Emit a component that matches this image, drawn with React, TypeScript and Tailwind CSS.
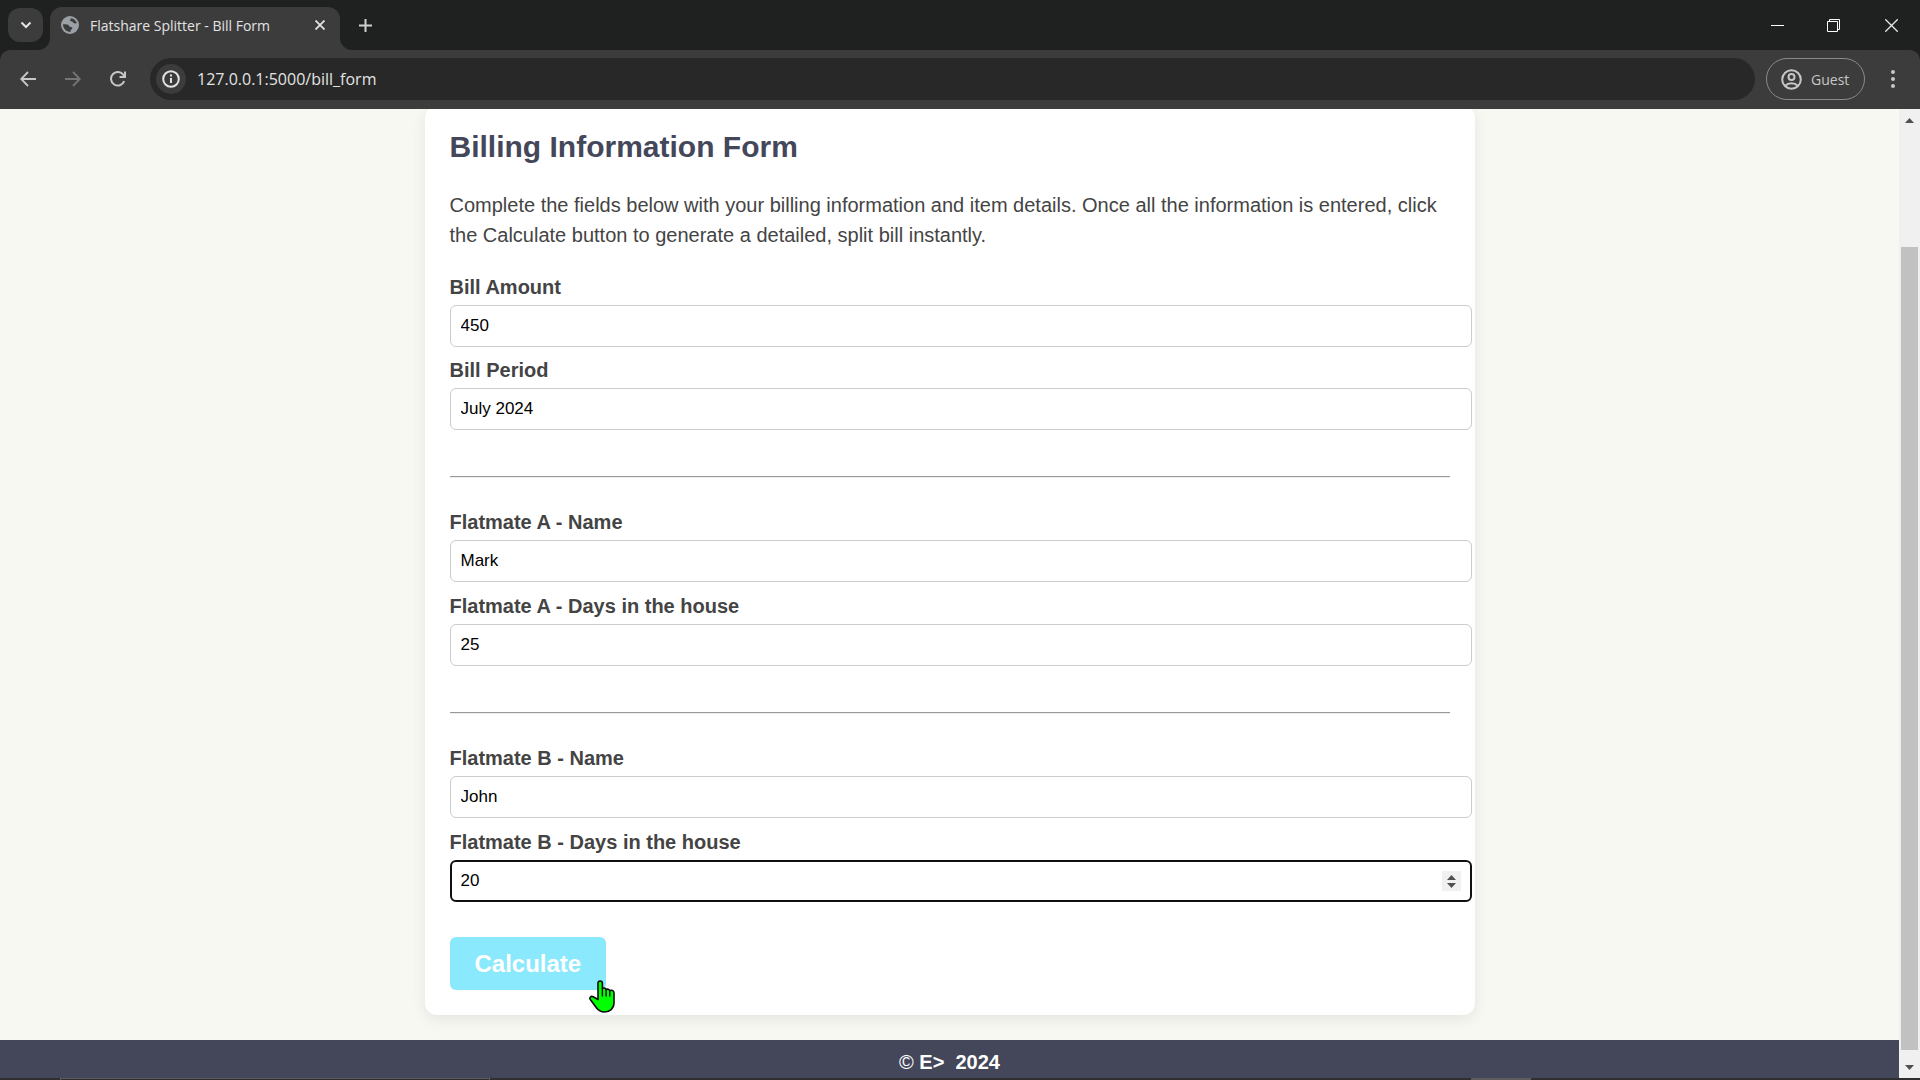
import React, { useState } from "react";

type FieldProps = {
  id: string;
  label: string;
  initial: string;
  numeric?: boolean;
  focused?: boolean;
};

function Field({ id, label, initial, numeric, focused }: FieldProps) {
  const [value, setValue] = useState(initial);
  const step = (by: number) => setValue(String(Number(value || 0) + by));
  return (
    <div className="flex flex-col gap-[3px]">
      <label htmlFor={id} className="text-[20px] leading-[30px] font-bold text-[#444]">
        {label}
      </label>
      <div
        className={
          focused
            ? "flex h-[42px] items-center rounded-md border-2 border-[#101010] bg-white pl-[9px] pr-[9px]"
            : "flex h-[42px] items-center rounded-md border border-[#ccc] bg-white px-[10px]"
        }
      >
        <input
          id={id}
          type="text"
          inputMode={numeric ? "numeric" : "text"}
          value={value}
          onChange={(e) => setValue(e.target.value)}
          className="h-full min-w-0 flex-1 bg-transparent text-[17px] text-black outline-none"
        />
        {focused && (
          <span className="flex h-5 w-[19px] flex-col bg-[#f0f0f0]">
            <button type="button" aria-label="Increase" onClick={() => step(1)} className="flex flex-1 items-end justify-center pb-px">
              <svg width="9" height="5" viewBox="0 0 9 5" fill="#505050"><path d="M0 5 4.500 0 9 5z" /></svg>
            </button>
            <button type="button" aria-label="Decrease" onClick={() => step(-1)} className="flex flex-1 items-start justify-center pt-[2px]">
              <svg width="9" height="5" viewBox="0 0 9 5" fill="#505050"><path d="M0 0h9L4.500 5z" /></svg>
            </button>
          </span>
        )}
      </div>
    </div>
  );
}

function Divider() {
  return <hr className="mr-[22px] mt-[46px] mb-[29px] h-[2px] border-0 border-t border-[#9a9a9a] bg-[#eee]" />;
}

function TabStrip() {
  return (
    <div className="flex h-[50px] items-stretch bg-[#1f2020]">
      <button type="button" aria-label="Search tabs" className="mt-2 ml-2 flex h-[34px] w-[35px] shrink-0 items-center justify-center rounded-xl bg-[#3c3c3c]">
        <svg width="12" height="8" viewBox="0 0 12 8" fill="none" stroke="#e3e3e3" strokeWidth="2"><path d="M1.500 1.500 6 6l4.500-4.500" /></svg>
      </button>
      <div className="relative mt-[7px] ml-[7px] flex w-[290px] shrink-0 items-center rounded-t-xl bg-[#3c3c3c] pr-[10px] pb-[7px] pl-[11px]">
        <svg className="absolute bottom-0 -left-3" width="12" height="12" fill="#3c3c3c"><path d="M12 0v12H0A12 12 0 0 0 12 0z" /></svg>
        <svg className="absolute -right-3 bottom-0" width="12" height="12" fill="#3c3c3c"><path d="M0 0v12h12A12 12 0 0 1 0 0z" /></svg>
        <svg width="18" height="18" viewBox="0 0 18 18">
          <circle cx="9" cy="9" r="9" fill="#9aa0a6" />
          <path d="M9.500 2.200C12 2.300 14.800 4 15.700 7c-1 .7-2.200.6-3 .1-.8-.5-.7-1.600-1.700-1.700-1-.1-2 .2-1.900-.8.100-.9 1-1.300.4-2.400zM2 8.300c1.700.2 3.600-.1 5 .4 1.300.5.900 2 2.200 2.200 1.300.1 2.200.1 2.100 1.300-.1 1.200-1.400 1-1.600 2.100-.1.700-.1 1.100-.3 1.700C5.500 16 1.900 12.700 2 8.300z" fill="#3c3c3c" />
        </svg>
        <span className="ml-[11px] flex-1 truncate text-[14px] text-[#e3e3e3]">Flatshare Splitter - Bill Form</span>
        <button type="button" aria-label="Close tab" className="flex h-5 w-5 items-center justify-center">
          <svg width="10" height="10" viewBox="0 0 10 10" stroke="#e3e3e3" strokeWidth="1.800"><path d="m.5.500 9 9m0-9-9 9" /></svg>
        </button>
      </div>
      <button type="button" aria-label="New tab" className="ml-[15px] flex w-5 items-center justify-center">
        <svg width="13" height="13" viewBox="0 0 13 13" stroke="#d0d0d0" strokeWidth="2"><path d="M6.500 0v13M0 6.500h13" /></svg>
      </button>
      <div className="ml-auto flex">
        <button type="button" aria-label="Minimize" className="flex w-14 items-center justify-center">
          <svg width="13" height="13" viewBox="0 0 13 13" stroke="#fff"><path d="M0 6.500h13" /></svg>
        </button>
        <button type="button" aria-label="Restore" className="flex w-[57px] items-center justify-center">
          <svg width="13" height="13" viewBox="0 0 13 13" fill="none" stroke="#fff"><path d="M.5 2.500h10v10H.5zM2.500 2.500v-2h10v10h-2" /></svg>
        </button>
        <button type="button" aria-label="Close" className="flex w-[58px] items-center justify-center">
          <svg width="13" height="13" viewBox="0 0 13 13" stroke="#e8e8e8" strokeWidth="1.300"><path d="m.3.300 12.400 12.400m0-12.400L.3 12.700" /></svg>
        </button>
      </div>
    </div>
  );
}

function Toolbar() {
  return (
    <div className="bg-[#1f2020]">
      <div className="flex h-[59px] items-center rounded-t-[10px] bg-[#3c3c3c] pb-[1px]">
        <button type="button" aria-label="Back" className="ml-4 flex h-6 w-6 items-center justify-center">
          <svg width="16" height="16" viewBox="0 0 16 16" fill="none" stroke="#c7c7c7" strokeWidth="1.800"><path d="M16 8H1.500M8 1 1.200 8 8 15" /></svg>
        </button>
        <button type="button" aria-label="Forward" className="ml-[21px] flex h-6 w-6 items-center justify-center">
          <svg width="16" height="16" viewBox="0 0 16 16" fill="none" stroke="#757575" strokeWidth="1.800"><path d="M0 8h14.500M8 1l6.800 7L8 15" /></svg>
        </button>
        <button type="button" aria-label="Reload" className="ml-[21px] flex h-6 w-6 items-center justify-center">
          <svg width="16" height="16" viewBox="0 0 16 16" fill="none" stroke="#c7c7c7" strokeWidth="2"><path d="M14.200 10.200A6.800 6.800 0 1 1 13.500 4L15 6M15 .500V6H9.500" /></svg>
        </button>
        <div className="ml-5 flex h-[42px] flex-1 items-center rounded-full bg-[#282828] pl-[6px]">
          <button type="button" aria-label="Site information" className="flex h-[30px] w-[30px] items-center justify-center rounded-full bg-[#3c3c3c]">
            <svg width="18" height="18" viewBox="0 0 18 18" fill="none" stroke="#e3e3e3" strokeWidth="2"><circle cx="9" cy="9" r="7.800" /><path d="M9 8v5M9 4.500v2" /></svg>
          </button>
          <input
            aria-label="Address"
            defaultValue="127.0.0.1:5000/bill_form"
            className="ml-[11px] min-w-0 flex-1 bg-transparent text-[16px] text-[#e3e3e3] outline-none"
          />
        </div>
        <button type="button" className="ml-[11px] flex h-[42px] w-[99px] items-center rounded-full border border-[#8a8a8a] pl-[14px] text-[14px] text-[#c7c7c7]">
          <svg width="21" height="21" viewBox="0 0 21 21" fill="none" stroke="#c7c7c7" strokeWidth="2"><circle cx="10.500" cy="10.500" r="9.300" /><circle cx="10.500" cy="8" r="3" /><path d="M4 17c3.500-3.600 9.500-3.600 13 0" /></svg>
          <span className="ml-[9px]">Guest</span>
        </button>
        <button type="button" aria-label="Menu" className="mr-[15px] ml-[15px] flex h-6 w-[25px] items-center justify-center">
          <svg width="4" height="18" viewBox="0 0 4 18" fill="#c7c7c7"><circle cx="2" cy="2" r="2" /><circle cx="2" cy="9" r="2" /><circle cx="2" cy="16" r="2" /></svg>
        </button>
      </div>
    </div>
  );
}

function ScrollBar() {
  return (
    <div className="flex w-[21px] shrink-0 flex-col items-center bg-[#f0f0f0]">
      <button type="button" aria-label="Scroll up" className="flex h-[21px] w-full items-center justify-center pt-[2px]">
        <svg width="9" height="5" viewBox="0 0 9 5" fill="#505050"><path d="M0 5 4.500 0 9 5z" /></svg>
      </button>
      <div className="flex w-[17px] flex-1 flex-col">
        <div className="grow-[117]" />
        <div className="grow-[803] bg-[#c1c1c1]" />
        <div className="grow-[7]" />
      </div>
      <button type="button" aria-label="Scroll down" className="flex h-[21px] w-full items-center justify-center">
        <svg width="9" height="5" viewBox="0 0 9 5" fill="#505050"><path d="M0 0h9L4.500 5z" /></svg>
      </button>
    </div>
  );
}

function HandCursor() {
  return (
    <svg className="pointer-events-none absolute -right-[9px] -bottom-[23px]" width="26" height="33" viewBox="0 0 26 33">
      <path
        d="M9 19.500V3.200a2.200 2.200 0 0 1 4.400 0V8.500c1.200-1 3.200-.600 3.700 1 1.300-.8 3.100-.4 3.600 1.100 1.600-.8 4.300 0 4.300 2.200v10C25 28.500 20.500 32 15.500 32c-4 0-6.200-1.600-8.300-4.500L1.300 19.600c-1.300-2 .8-4 2.900-2.800z"
        fill="#0f0" stroke="#0a0a0a" strokeWidth="1.600" strokeLinejoin="round"
      />
      <path d="M13.400 8.500V16M17.100 9.500V16M20.800 10.600V16" stroke="#0a0a0a" strokeWidth="1.400" strokeLinecap="round" />
    </svg>
  );
}

function BillingForm() {
  return (
    <form
      onSubmit={(e) => e.preventDefault()}
      className="-mt-[3px] mb-[25px] w-[1050px] max-w-full rounded-xl bg-white pt-[18px] pr-[3px] pb-[25px] pl-[25px] shadow-[0_4px_15px_rgba(0,0,0,0.08)]"
    >
      <h1 className="mb-[21px] text-[30px] leading-[45px] font-bold text-[#44475a]">Billing Information Form</h1>
      <p className="mr-[22px] mb-[22px] text-[20px] leading-[30px] text-[#444]">
        Complete the fields below with your billing information and item details. Once all the information is entered, click the Calculate button to generate a detailed, split bill instantly.
      </p>
      <div className="flex flex-col gap-2">
        <Field id="amount" label="Bill Amount" initial="450" numeric />
        <Field id="period" label="Bill Period" initial="July 2024" />
      </div>
      <Divider />
      <div className="flex flex-col gap-[9px]">
        <Field id="name-a" label="Flatmate A - Name" initial="Mark" />
        <Field id="days-a" label="Flatmate A - Days in the house" initial="25" numeric />
      </div>
      <Divider />
      <div className="flex flex-col gap-[9px]">
        <Field id="name-b" label="Flatmate B - Name" initial="John" />
        <Field id="days-b" label="Flatmate B - Days in the house" initial="20" numeric focused />
      </div>
      <div className="relative mt-[35px] w-fit">
        <button type="submit" className="block h-[53px] rounded-md bg-[#8be9fd] px-[25px] text-[24px] font-bold text-white">
          Calculate
        </button>
        <HandCursor />
      </div>
    </form>
  );
}

export default function App() {
  return (
    <div className="flex min-h-screen flex-col bg-[#f8f8f2] font-['Liberation_Sans',Arial,sans-serif]">
      <header className="font-['Open_Sans','Noto_Sans',sans-serif]">
        <TabStrip />
        <Toolbar />
      </header>
      <div className="flex flex-1">
        <div className="flex min-w-0 flex-1 flex-col">
          <main className="flex flex-1 flex-col items-center overflow-hidden">
            <BillingForm />
          </main>
          <footer className="flex h-[38px] items-center justify-center bg-[#44475a] pt-[6px] text-[20px] leading-[30px] font-bold whitespace-pre text-white">
            <span><span className="font-normal">©</span> E&gt;  2024</span>
          </footer>
        </div>
        <ScrollBar />
      </div>
      <div className="flex h-[2px] bg-[#2f2f2f]">
        <div className="ml-[60px] w-[430px] border border-b-0 border-[#5c5c5c]" />
        <div className="mr-[389px] ml-auto w-[60px] bg-[#5c5c5c]" />
      </div>
    </div>
  );
}
